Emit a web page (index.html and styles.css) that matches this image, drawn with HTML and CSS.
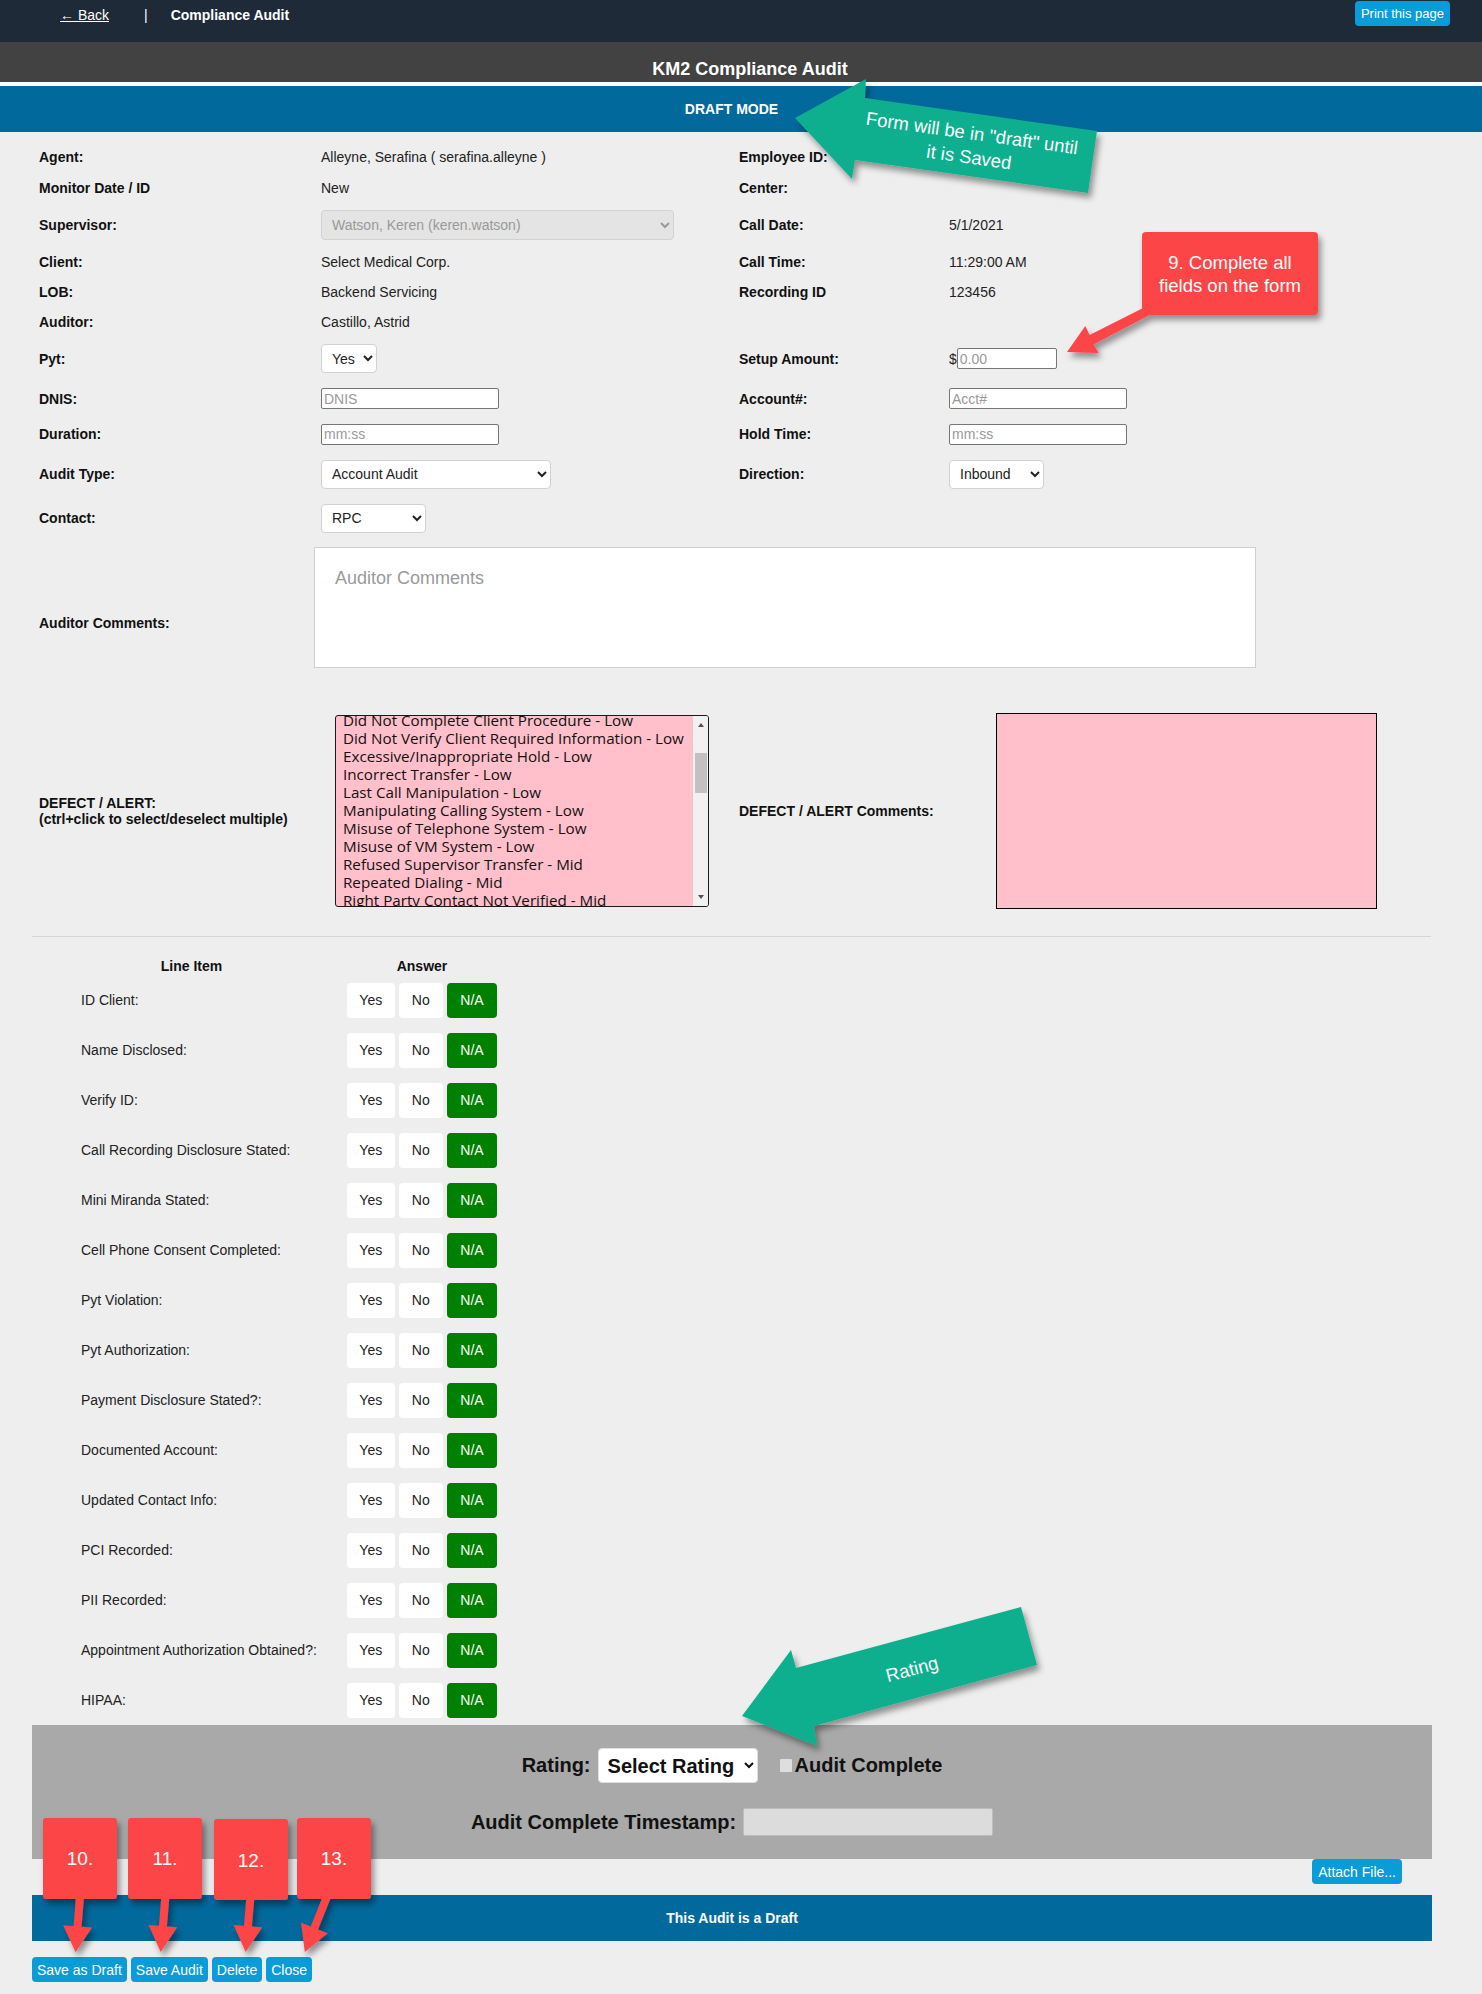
FILE: index.html
```html
<!DOCTYPE html>
<html lang="en">
<head>
<meta charset="utf-8">
<title>KM2 Compliance Audit</title>
<link rel="stylesheet" href="styles.css">
</head>
<body>
<header class="topnav">
  <a class="back" href="#">← Back</a>
  <span class="sep">|</span>
  <span class="crumb">Compliance Audit</span>
  <button class="btn btn-print" type="button">Print this page</button>
</header>
<div class="titlebar">KM2 Compliance Audit</div>
<div class="modebar">DRAFT MODE</div>

<main class="page">
  <section class="form">
    <div class="lbl">Agent:</div>
    <div class="val">Alleyne, Serafina ( serafina.alleyne )</div>
    <div class="lbl">Employee ID:</div>
    <div class="val"></div>

    <div class="lbl">Monitor Date / ID</div>
    <div class="val">New</div>
    <div class="lbl">Center:</div>
    <div class="val"></div>

    <div class="lbl">Supervisor:</div>
    <div class="val"><select class="sel sel-sup" disabled><option>Watson, Keren (keren.watson)</option></select></div>
    <div class="lbl">Call Date:</div>
    <div class="val">5/1/2021</div>

    <div class="lbl">Client:</div>
    <div class="val">Select Medical Corp.</div>
    <div class="lbl">Call Time:</div>
    <div class="val">11:29:00 AM</div>

    <div class="lbl">LOB:</div>
    <div class="val">Backend Servicing</div>
    <div class="lbl">Recording ID</div>
    <div class="val">123456</div>

    <div class="lbl">Auditor:</div>
    <div class="val">Castillo, Astrid</div>
    <div></div>
    <div></div>

    <div class="lbl">Pyt:</div>
    <div class="val"><select class="sel sel-pyt"><option>Yes</option><option>No</option></select></div>
    <div class="lbl">Setup Amount:</div>
    <div class="val money">$<input class="txt txt-amt" type="text" placeholder="0.00"></div>

    <div class="lbl">DNIS:</div>
    <div class="val"><input class="txt" type="text" placeholder="DNIS"></div>
    <div class="lbl">Account#:</div>
    <div class="val"><input class="txt" type="text" placeholder="Acct#"></div>

    <div class="lbl">Duration:</div>
    <div class="val"><input class="txt" type="text" placeholder="mm:ss"></div>
    <div class="lbl">Hold Time:</div>
    <div class="val"><input class="txt" type="text" placeholder="mm:ss"></div>

    <div class="lbl">Audit Type:</div>
    <div class="val"><select class="sel sel-type"><option>Account Audit</option></select></div>
    <div class="lbl">Direction:</div>
    <div class="val"><select class="sel sel-dir"><option>Inbound</option><option>Outbound</option></select></div>

    <div class="lbl">Contact:</div>
    <div class="val"><select class="sel sel-contact"><option>RPC</option></select></div>
    <div></div>
    <div></div>

    <div class="lbl">Auditor Comments:</div>
    <textarea class="comments" placeholder="Auditor Comments"></textarea>

    <div class="lbl lbl-defect">DEFECT / ALERT:<br>(ctrl+click to select/deselect multiple)</div>
    <div class="val">
      <div class="listbox">
        <div class="opts">
          <div class="opts-inner">
            <div class="opt">Did Not Complete Client Procedure - Low</div>
            <div class="opt">Did Not Verify Client Required Information - Low</div>
            <div class="opt">Excessive/Inappropriate Hold - Low</div>
            <div class="opt">Incorrect Transfer - Low</div>
            <div class="opt">Last Call Manipulation - Low</div>
            <div class="opt">Manipulating Calling System - Low</div>
            <div class="opt">Misuse of Telephone System - Low</div>
            <div class="opt">Misuse of VM System - Low</div>
            <div class="opt">Refused Supervisor Transfer - Mid</div>
            <div class="opt">Repeated Dialing - Mid</div>
            <div class="opt">Right Party Contact Not Verified - Mid</div>
          </div>
        </div>
        <div class="sbar">
          <span class="sb-up"></span>
          <span class="sb-thumb"></span>
          <span class="sb-down"></span>
        </div>
      </div>
    </div>
    <div class="lbl">DEFECT / ALERT Comments:</div>
    <div class="val"><textarea class="defect-comments"></textarea></div>
  </section>

  <hr class="divider">

  <section class="items">
    <div class="th">Line Item</div>
    <div class="th">Answer</div>

    <div class="item">ID Client:</div>
    <div class="answers"><button class="ans yes" type="button">Yes</button><button class="ans no" type="button">No</button><button class="ans na" type="button">N/A</button></div>
    <div class="item">Name Disclosed:</div>
    <div class="answers"><button class="ans yes" type="button">Yes</button><button class="ans no" type="button">No</button><button class="ans na" type="button">N/A</button></div>
    <div class="item">Verify ID:</div>
    <div class="answers"><button class="ans yes" type="button">Yes</button><button class="ans no" type="button">No</button><button class="ans na" type="button">N/A</button></div>
    <div class="item">Call Recording Disclosure Stated:</div>
    <div class="answers"><button class="ans yes" type="button">Yes</button><button class="ans no" type="button">No</button><button class="ans na" type="button">N/A</button></div>
    <div class="item">Mini Miranda Stated:</div>
    <div class="answers"><button class="ans yes" type="button">Yes</button><button class="ans no" type="button">No</button><button class="ans na" type="button">N/A</button></div>
    <div class="item">Cell Phone Consent Completed:</div>
    <div class="answers"><button class="ans yes" type="button">Yes</button><button class="ans no" type="button">No</button><button class="ans na" type="button">N/A</button></div>
    <div class="item">Pyt Violation:</div>
    <div class="answers"><button class="ans yes" type="button">Yes</button><button class="ans no" type="button">No</button><button class="ans na" type="button">N/A</button></div>
    <div class="item">Pyt Authorization:</div>
    <div class="answers"><button class="ans yes" type="button">Yes</button><button class="ans no" type="button">No</button><button class="ans na" type="button">N/A</button></div>
    <div class="item">Payment Disclosure Stated?:</div>
    <div class="answers"><button class="ans yes" type="button">Yes</button><button class="ans no" type="button">No</button><button class="ans na" type="button">N/A</button></div>
    <div class="item">Documented Account:</div>
    <div class="answers"><button class="ans yes" type="button">Yes</button><button class="ans no" type="button">No</button><button class="ans na" type="button">N/A</button></div>
    <div class="item">Updated Contact Info:</div>
    <div class="answers"><button class="ans yes" type="button">Yes</button><button class="ans no" type="button">No</button><button class="ans na" type="button">N/A</button></div>
    <div class="item">PCI Recorded:</div>
    <div class="answers"><button class="ans yes" type="button">Yes</button><button class="ans no" type="button">No</button><button class="ans na" type="button">N/A</button></div>
    <div class="item">PII Recorded:</div>
    <div class="answers"><button class="ans yes" type="button">Yes</button><button class="ans no" type="button">No</button><button class="ans na" type="button">N/A</button></div>
    <div class="item">Appointment Authorization Obtained?:</div>
    <div class="answers"><button class="ans yes" type="button">Yes</button><button class="ans no" type="button">No</button><button class="ans na" type="button">N/A</button></div>
    <div class="item">HIPAA:</div>
    <div class="answers"><button class="ans yes" type="button">Yes</button><button class="ans no" type="button">No</button><button class="ans na" type="button">N/A</button></div>
  </section>

  <section class="rating-panel">
    <div class="rating-row">
      <span>Rating:</span>
      <select class="sel sel-rating"><option>Select Rating</option></select>
      <input class="chk" type="checkbox">
      <span>Audit Complete</span>
    </div>
    <div class="ts-row">
      <span>Audit Complete Timestamp:</span>
      <input class="ts-input" type="text" readonly>
    </div>
  </section>

  <div class="attach-row"><button class="btn btn-attach" type="button">Attach File...</button></div>

  <div class="draft-bar">This Audit is a Draft</div>

  <div class="actions">
    <button class="btn btn-act" type="button">Save as Draft</button>
    <button class="btn btn-act" type="button">Save Audit</button>
    <button class="btn btn-act" type="button">Delete</button>
    <button class="btn btn-act" type="button">Close</button>
  </div>
</main>

<svg class="annotations" width="1482" height="1994" viewBox="0 0 1482 1994" aria-hidden="true">
  <defs>
    <filter id="shadow" x="-20%" y="-20%" width="150%" height="160%">
      <feDropShadow dx="3" dy="5" stdDeviation="3" flood-color="#000" flood-opacity="0.4"/>
    </filter>
  </defs>

  <g filter="url(#shadow)">
    <polygon class="teal" points="795,118 866,79 865,98 1097,131 1088,193 855,160 852,179"/>
  </g>
  <text class="ann-text" text-anchor="middle" dominant-baseline="central" transform="translate(972 133) rotate(8)">Form will be in "draft" until</text>
  <text class="ann-text" text-anchor="middle" dominant-baseline="central" transform="translate(969 157) rotate(8)">it is Saved</text>

  <g filter="url(#shadow)">
    <polygon class="red" points="1067,352 1085.3,326.1 1089.6,335 1158,300.6 1162,308.4 1093.6,344.4 1098.7,352.9"/>
    <rect class="red" x="1142" y="232" width="176" height="83" rx="4"/>
  </g>
  <text class="ann-text" text-anchor="middle" x="1230" y="269">9. Complete all</text>
  <text class="ann-text" text-anchor="middle" x="1230" y="292">fields on the form</text>

  <g filter="url(#shadow)">
    <polygon class="teal" points="742,1716 791,1650 796,1668 1021,1607 1037,1665 814,1726 817,1746"/>
  </g>
  <text class="ann-text" text-anchor="middle" dominant-baseline="central" transform="translate(912 1669) rotate(-15)">Rating</text>

  <g filter="url(#shadow)">
    <polygon class="red" points="75.6,1952.3 63.1,1925.3 73.6,1926.1 77.3,1879.7 85.3,1880.3 81.6,1926.7 92.1,1927.5"/>
    <polygon class="red" points="160.7,1952 148.5,1924.9 158.9,1925.8 162.8,1879.7 170.8,1880.3 166.9,1926.4 177.3,1927.3"/>
    <polygon class="red" points="245.7,1952 233.5,1924.9 243.9,1925.8 247.9,1879.7 255.9,1880.3 251.9,1926.4 262.3,1927.3"/>
    <polygon class="red" points="304.8,1952 301,1922.5 310.7,1926.4 330.8,1876.3 338.2,1879.3 318.1,1929.4 327.9,1933.3"/>
    <rect class="red" x="43" y="1818" width="74" height="81" rx="3"/>
    <rect class="red" x="128" y="1818" width="74" height="81" rx="3"/>
    <rect class="red" x="214" y="1819" width="74" height="81" rx="3"/>
    <rect class="red" x="297" y="1818" width="74" height="81" rx="3"/>
  </g>
  <text class="ann-text num" text-anchor="middle" x="80" y="1865">10.</text>
  <text class="ann-text num" text-anchor="middle" x="165" y="1865">11.</text>
  <text class="ann-text num" text-anchor="middle" x="251" y="1867">12.</text>
  <text class="ann-text num" text-anchor="middle" x="334" y="1865">13.</text>
</svg>
</body>
</html>
```

FILE: styles.css
```css
* {
  box-sizing: border-box;
}

html,
body {
  margin: 0;
}

body {
  position: relative;
  background: #eeeeee;
  font-family: "Liberation Sans", Arial, Helvetica, sans-serif;
  font-size: 14px;
  color: #222;
}

/* ---------- top navigation ---------- */
.topnav {
  display: flex;
  align-items: flex-start;
  height: 42px;
  padding: 0 32px 0 60px;
  background: #1f2a38;
  color: #fff;
  line-height: 16px;
}

.topnav .back {
  margin-top: 7px;
  color: #fff;
  text-decoration: underline;
}

.topnav .sep {
  margin: 7px 0 0 35px;
}

.topnav .crumb {
  margin: 7px 0 0 23px;
  font-weight: bold;
}

.btn {
  font-family: "Liberation Sans", Arial, Helvetica, sans-serif;
  color: #fff;
  background: #0a9bd9;
  border: 0;
  border-radius: 4px;
  cursor: pointer;
}

.btn-print {
  margin: 1px 0 0 auto;
  height: 25px;
  padding: 0 6px;
  font-size: 13px;
}

.titlebar {
  height: 44px;
  padding: 16px 0 0 18px;
  background: #424242;
  border-bottom: 4px solid #fff;
  color: #fff;
  font-size: 18px;
  font-weight: bold;
  line-height: 22px;
  text-align: center;
}

.modebar {
  height: 46px;
  padding-right: 19px;
  background: #02699c;
  color: #fff;
  font-weight: bold;
  line-height: 46px;
  text-align: center;
}

/* ---------- page ---------- */
.page {
  margin: 0 50px 0 32px;
}

.form {
  display: grid;
  grid-template-columns: 282px 418px 210px 1fr;
  grid-template-rows: 30px 31px 43px 31px 29px 31px 43px 37px 34px 46px 42px 168px 208px;
  align-items: center;
  margin-left: 7px;
  padding-top: 10px;
}

.lbl {
  font-weight: bold;
  color: #111;
  line-height: 16px;
}

.val {
  color: #222;
  line-height: 16px;
}

.money {
  display: flex;
  align-items: center;
}

.sel {
  display: block;
  height: 29px;
  padding: 0 4px 0 6px;
  font-family: "Liberation Sans", Arial, Helvetica, sans-serif;
  font-size: 14px;
  color: #222;
  background: #fff;
  border: 1px solid #d2d2d2;
  border-radius: 4px;
}

.sel-sup {
  width: 353px;
  height: 30px;
  background: #e4e4e4;
  color: #999;
  opacity: 1;
}

.sel-pyt {
  width: 56px;
}

.sel-type {
  width: 230px;
}

.sel-contact {
  width: 105px;
}

.sel-dir {
  width: 95px;
}

.txt {
  display: block;
  width: 178px;
  height: 21px;
  padding: 0 2px;
  font-family: "Liberation Sans", Arial, Helvetica, sans-serif;
  font-size: 14px;
  color: #222;
  background: #fff;
  border: 1px solid #767676;
  border-radius: 2px;
}

.txt::placeholder {
  color: #9a9a9a;
}

.txt-amt {
  width: 100px;
}

.comments {
  display: block;
  grid-column: 2 / 5;
  align-self: start;
  width: 942px;
  height: 121px;
  margin: 8px 0 0 -7px;
  padding: 20px;
  font-family: "Liberation Sans", Arial, Helvetica, sans-serif;
  font-size: 18px;
  background: #fff;
  border: 1px solid #cfcfcf;
  resize: none;
}

.comments::placeholder {
  color: #9a9a9a;
}

/* listbox */
.listbox {
  display: flex;
  width: 374px;
  height: 192px;
  margin-left: 14px;
  background: #ffc0cb;
  border: 1px solid #1a1a1a;
  border-radius: 3px;
  overflow: hidden;
}

.opts {
  flex: 1;
  overflow: hidden;
  padding-left: 7px;
  font-family: "Open Sans", "Liberation Sans", sans-serif;
  font-size: 15.2px;
  line-height: 18px;
  color: #111;
}

.opts-inner {
  margin-top: -5px;
}

.opt {
  white-space: nowrap;
}

.sbar {
  display: flex;
  flex-direction: column;
  align-items: center;
  width: 15px;
  background: #f1f1f1;
}

.sb-up {
  width: 0;
  height: 0;
  margin-top: 7px;
  border-left: 3.5px solid transparent;
  border-right: 3.5px solid transparent;
  border-bottom: 4px solid #505050;
}

.sb-thumb {
  width: 12px;
  height: 40px;
  margin-top: 26px;
  background: #c1c1c1;
}

.sb-down {
  width: 0;
  height: 0;
  margin: auto 0 7px;
  border-left: 3.5px solid transparent;
  border-right: 3.5px solid transparent;
  border-top: 4px solid #505050;
}

.defect-comments {
  display: block;
  width: 381px;
  height: 196px;
  margin-left: 47px;
  background: #ffc0cb;
  border: 1px solid #000;
  resize: none;
}

.divider {
  height: 1px;
  margin: 21px 1px 0 0;
  border: 0;
  background: #d5d5d5;
}

/* ---------- line items ---------- */
.items {
  display: grid;
  grid-template-columns: 261px 150px;
  grid-template-rows: 18px;
  grid-auto-rows: 50px;
  column-gap: 25px;
  align-items: center;
  margin: 20px 0 0 29px;
}

.th {
  font-weight: bold;
  color: #111;
  text-align: center;
  line-height: 18px;
}

.item {
  padding-left: 20px;
  color: #222;
  white-space: nowrap;
}

.answers {
  display: flex;
  gap: 4.5px;
}

.ans {
  height: 35px;
  padding: 0;
  font-family: "Liberation Sans", Arial, Helvetica, sans-serif;
  font-size: 14px;
  color: #222;
  background: #fff;
  border: 0;
  border-radius: 4px;
  text-align: center;
}

.ans.yes {
  width: 47.5px;
}

.ans.no {
  width: 43.6px;
}

.ans.na {
  width: 49.7px;
  color: #fff;
  background: #008000;
}

/* ---------- rating ---------- */
.rating-panel {
  display: flex;
  flex-direction: column;
  align-items: center;
  gap: 25px;
  padding: 23px 0;
  background: #a9a9a9;
  color: #111;
  font-size: 20px;
  font-weight: bold;
}

.rating-row {
  display: flex;
  align-items: center;
  height: 35px;
}

.sel-rating {
  width: 160px;
  height: 35px;
  margin-left: 7px;
  padding-left: 5px;
  font-size: 20px;
  font-weight: bold;
  color: #111;
  border-color: #e0e0e0;
}

.chk {
  appearance: none;
  width: 12px;
  height: 13px;
  margin: 0 3px 0 22px;
  background: #dedede;
  border: 0;
  border-radius: 1px;
}

.ts-row {
  display: flex;
  align-items: center;
  height: 28px;
}

.ts-input {
  width: 250px;
  height: 28px;
  margin-left: 7px;
  background: #dcdcdc;
  border: 1px solid #bdbdbd;
  border-radius: 2px;
}

.attach-row {
  display: flex;
  justify-content: flex-end;
  height: 36px;
  padding-right: 30px;
}

.btn-attach {
  height: 25px;
  padding: 0 6px;
  font-size: 14px;
}

.draft-bar {
  height: 46px;
  background: #02699c;
  color: #fff;
  font-weight: bold;
  line-height: 46px;
  text-align: center;
}

.actions {
  display: flex;
  gap: 4px;
  margin-top: 16px;
}

.btn-act {
  height: 25px;
  padding: 0 5px;
  font-size: 14px;
}

/* ---------- annotation layer ---------- */
.annotations {
  position: absolute;
  top: 0;
  left: 0;
  pointer-events: none;
}

.teal {
  fill: #0eaf8e;
}

.red {
  fill: #fc4547;
}

.ann-text {
  fill: #fff;
  font-family: "Liberation Sans", Arial, Helvetica, sans-serif;
  font-size: 18.5px;
}

.ann-text.num {
  font-size: 19px;
}
```
